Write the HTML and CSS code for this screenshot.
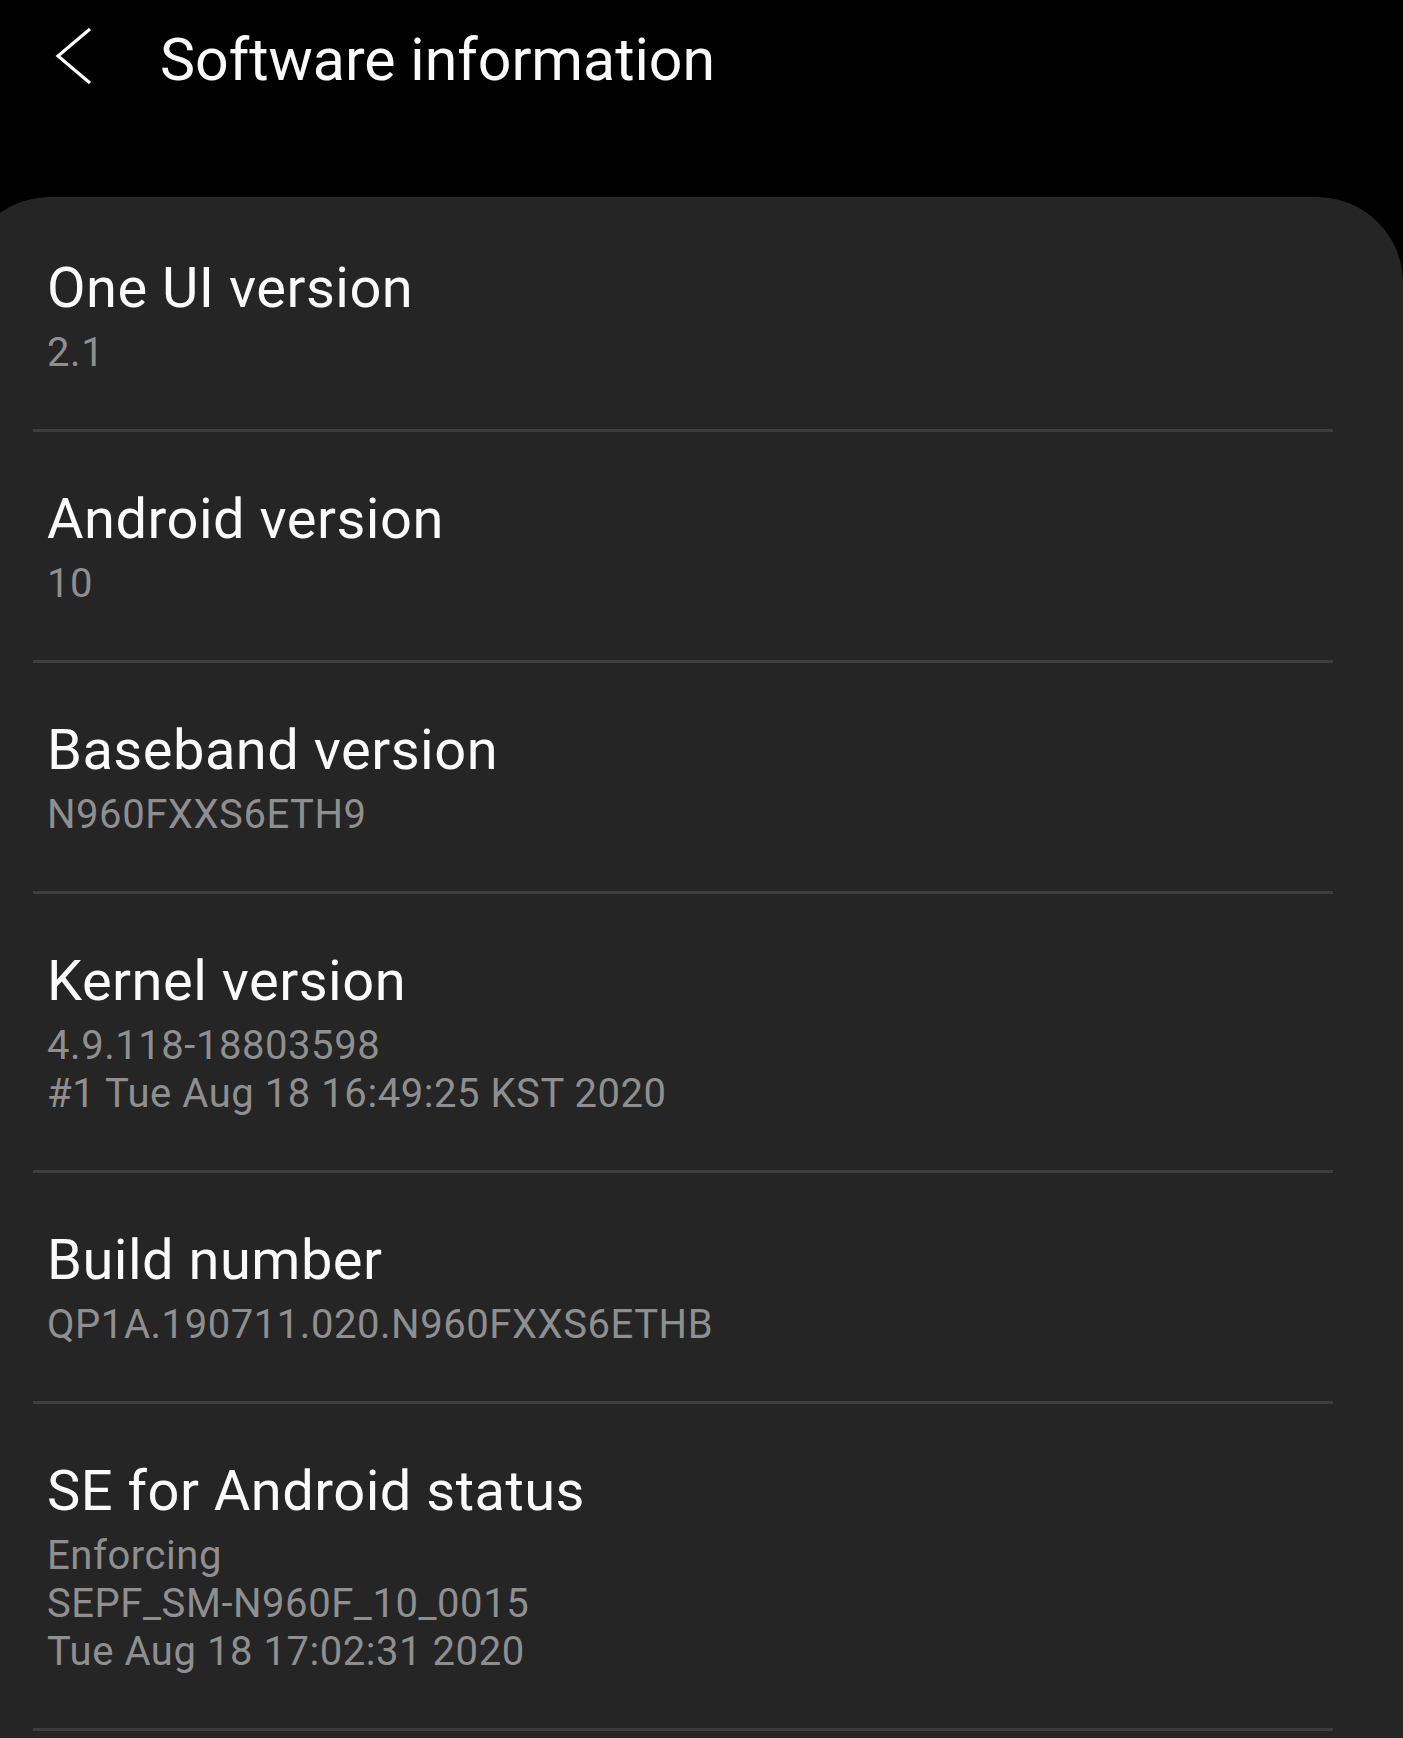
FILE: index.html
```html
<!DOCTYPE html>
<html lang="en">
<head>
<meta charset="utf-8">
<title>Software information</title>
<link rel="stylesheet" href="styles.css">
</head>
<body>
<div class="screen">
  <header class="appbar">
    <svg class="back" viewBox="0 0 44 62" width="44" height="62" aria-hidden="true">
      <path d="M39 2 L7 29 L39 56" fill="none" stroke="#ffffff" stroke-width="3.2" stroke-linecap="butt" stroke-linejoin="miter"/>
    </svg>
    <h1 class="appbar-title">Software information</h1>
  </header>

  <main class="card">
    <div class="item">
      <div class="item-title">One UI version</div>
      <div class="item-value">2.1</div>
    </div>
    <div class="item">
      <div class="item-title">Android version</div>
      <div class="item-value">10</div>
    </div>
    <div class="item">
      <div class="item-title">Baseband version</div>
      <div class="item-value">N960FXXS6ETH9</div>
    </div>
    <div class="item">
      <div class="item-title">Kernel version</div>
      <div class="item-value">4.9.118-18803598<br>#1 Tue Aug 18 16:49:25 KST 2020</div>
    </div>
    <div class="item">
      <div class="item-title">Build number</div>
      <div class="item-value">QP1A.190711.020.N960FXXS6ETHB</div>
    </div>
    <div class="item">
      <div class="item-title">SE for Android status</div>
      <div class="item-value">Enforcing<br>SEPF_SM-N960F_10_0015<br>Tue Aug 18 17:02:31 2020</div>
    </div>
  </main>
</div>
</body>
</html>
```

FILE: styles.css
```css
html, body {
  margin: 0;
  padding: 0;
  background: #000000;
}

body {
  width: 1403px;
  height: 1738px;
  overflow: hidden;
  font-family: Roboto, "Noto Sans", "Liberation Sans", sans-serif;
  -webkit-font-smoothing: antialiased;
}

.screen {
  display: flex;
  flex-direction: column;
  height: 1738px;
}

.appbar {
  display: flex;
  align-items: flex-start;
  padding-top: 25px;
  height: 70px;
  flex: none;
}

.back {
  display: block;
  margin-left: 51px;
  margin-top: 2px;
  flex: none;
}

.appbar-title {
  margin: 0 0 0 65px;
  font-size: 59px;
  line-height: 70px;
  font-weight: 400;
  color: #fafafa;
  letter-spacing: 0;
  white-space: nowrap;
}

.card {
  flex: 1;
  margin-top: 102px;
  margin-left: -36px;
  background: #252525;
  border-radius: 86px 86px 0 0;
  padding: 4px 70px 0 69px;
}

.item {
  padding: 55px 0 52px 14px;
  border-bottom: 3px solid #3e3e3e;
}

.item-title {
  font-size: 56px;
  line-height: 64px;
  color: #fafafa;
  letter-spacing: 0.5px;
  white-space: nowrap;
}

.item-value {
  margin-top: 9px;
  font-size: 40px;
  line-height: 48px;
  color: #8f8f8f;
  letter-spacing: 0.55px;
  white-space: nowrap;
}
```
